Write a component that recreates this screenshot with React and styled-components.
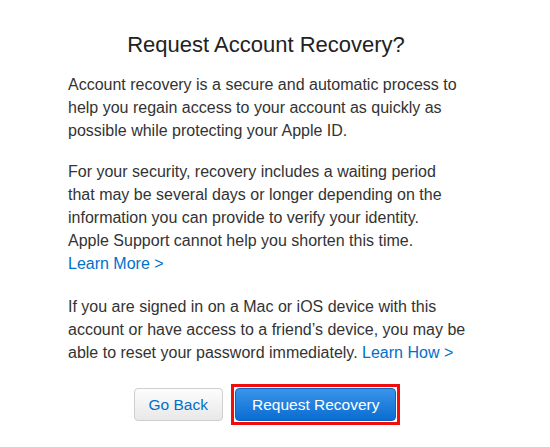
import React from 'react'
import styled, { createGlobalStyle } from 'styled-components'

const GlobalStyle = createGlobalStyle`
  body {
    margin: 0;
    background: #fff;
    font-family: "Liberation Sans", Arial, sans-serif;
  }
`

const Page = styled.div`
  width: 550px;
  height: 447px;
  padding-left: 68px;
  box-sizing: border-box;
`

const Panel = styled.div`
  width: 396px;
  padding-top: 33px;
  display: flex;
  flex-direction: column;
`

const Title = styled.h1`
  margin: 0 0 16px;
  font-size: 22px;
  line-height: 24px;
  font-weight: 400;
  color: #222;
  text-align: center;
`

const Text = styled.p`
  margin: 0 0 ${p => p.$gap ?? 18}px;
  font-size: 16px;
  line-height: 23px;
  color: #333;
  white-space: nowrap;
`

const Link = styled.a`
  color: #0070c9;
  text-decoration: none;
  cursor: pointer;
`

const Actions = styled.div`
  display: flex;
  justify-content: center;
  align-items: center;
  gap: 8px;
  margin-top: 20px;
  padding-left: 2px;
`

const Button = styled.button`
  height: 33px;
  padding: 0 ${p => (p.$primary ? 16 : 14)}px;
  border-radius: 4px;
  font-family: inherit;
  font-size: 15.5px;
  cursor: pointer;
  border: 1px solid ${p => (p.$primary ? '#0b64c0' : '#cfcfcf')};
  color: ${p => (p.$primary ? '#fff' : '#0070c9')};
  background: ${p =>
    p.$primary
      ? 'linear-gradient(#3a95ea, #0a6cd2)'
      : 'linear-gradient(#fdfdfd, #e8e8e8)'};
`

const Highlight = styled.div`
  border: 3px solid #f20d0d;
  padding: 1px;
  display: flex;
`

export default function App() {
  return (
    <Page>
      <GlobalStyle />
      <Panel>
        <Title>Request Account Recovery?</Title>
        <Text>
          Account recovery is a secure and automatic process to<br />
          help you regain access to your account as quickly as<br />
          possible while protecting your Apple ID.
        </Text>
        <Text $gap={20}>
          For your security, recovery includes a waiting period<br />
          that may be several days or longer depending on the<br />
          information you can provide to verify your identity.<br />
          Apple Support cannot help you shorten this time.<br />
          <Link>Learn More &gt;</Link>
        </Text>
        <Text $gap={0}>
          If you are signed in on a Mac or iOS device with this<br />
          account or have access to a friend’s device, you may be<br />
          able to reset your password immediately. <Link>Learn How &gt;</Link>
        </Text>
        <Actions>
          <Button>Go Back</Button>
          <Highlight>
            <Button $primary>Request Recovery</Button>
          </Highlight>
        </Actions>
      </Panel>
    </Page>
  )
}
